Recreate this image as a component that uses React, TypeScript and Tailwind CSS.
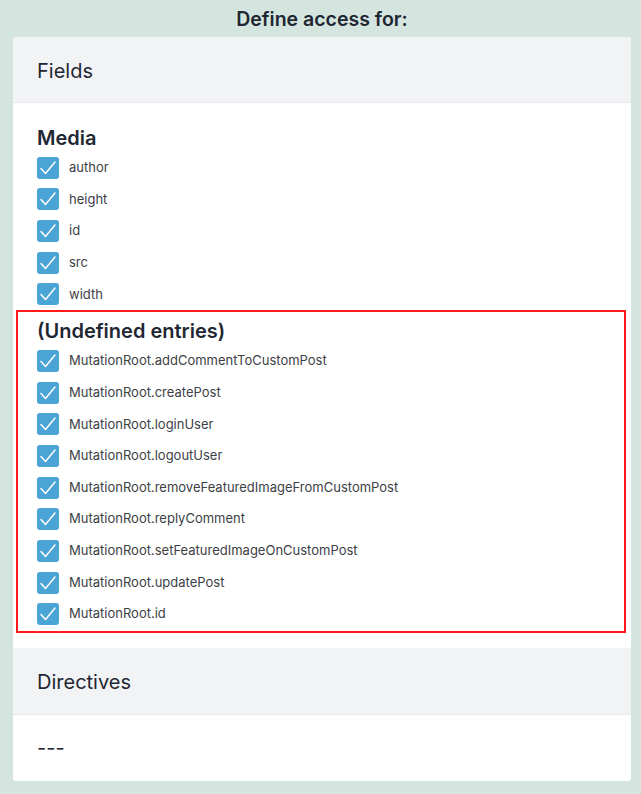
import React from "react";

const media = ["author", "height", "id", "src", "width"];
const undef = [
  "MutationRoot.addCommentToCustomPost",
  "MutationRoot.createPost",
  "MutationRoot.loginUser",
  "MutationRoot.logoutUser",
  "MutationRoot.removeFeaturedImageFromCustomPost",
  "MutationRoot.replyComment",
  "MutationRoot.setFeaturedImageOnCustomPost",
  "MutationRoot.updatePost",
  "MutationRoot.id",
];

function Check() {
  return (
    <span className="flex h-[22px] w-[22px] shrink-0 items-center justify-center rounded-[3px] bg-[#4aa5d6]">
      <svg width="22" height="22" viewBox="0 0 22 22" fill="none">
        <path d="M4 11.5 L8.5 16.5 L18 5" stroke="white" strokeWidth="1.5" strokeLinecap="round" strokeLinejoin="round" />
      </svg>
    </span>
  );
}

function Row({ label }: { label: string }) {
  return (
    <div className="flex h-[31.65px] items-center gap-[10px]">
      <Check />
      <span className="text-[13px] text-[#3c4146]">{label}</span>
    </div>
  );
}

export default function App() {
  return (
    <div className="min-h-[794px] bg-[#d4e5df] pl-[13px] pr-[10px] font-['Inter',sans-serif] text-[#1f2733]">
      <div className="flex h-[37px] items-center justify-center pt-[3px] text-[19.5px] font-semibold">
        Define access for:
      </div>
      <div className="rounded-[3px] bg-white">
        <div className="flex h-[66px] items-center rounded-t-[3px] border-b border-[#e6e8eb] bg-[#f2f3f5] px-[24px] pt-[2px] text-[20px]">
          Fields
        </div>
        <div className="pt-[21px]">
          <div className="px-[24px]">
            <div className="flex h-[28px] items-center text-[20px] font-semibold">Media</div>
            {media.map((m) => (
              <Row key={m} label={m} />
            ))}
          </div>
          <div className="ml-[3px] mr-[5px] border-2 border-[#ff1a1a] pb-[1px] pl-[19px] pt-[4px]">
            <div className="flex h-[29px] items-center text-[20px] font-semibold">(Undefined entries)</div>
            {undef.map((m) => (
              <Row key={m} label={m} />
            ))}
          </div>
        </div>
        <div className="mt-[15px] flex h-[67px] items-center border-b border-[#e6e8eb] bg-[#f2f3f5] px-[24px] pt-[2px] text-[20px]">
          Directives
        </div>
        <div className="flex h-[66px] items-center px-[24px] text-[20px]">---</div>
      </div>
    </div>
  );
}
